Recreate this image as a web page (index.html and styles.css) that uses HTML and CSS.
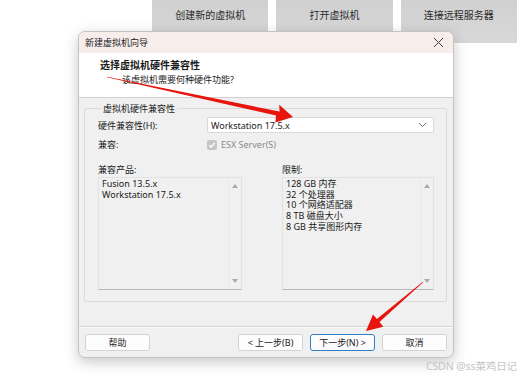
FILE: index.html
```html
<!DOCTYPE html>
<html lang="zh">
<head>
  <meta charset="UTF-8">
  <title>新建虚拟机向导</title>
  <link rel="stylesheet" href="styles.css">
</head>
<body>

  <div class="desk">

    <div class="toolbar">
      <div class="tool">创建新的虚拟机</div>
      <div class="tool">打开虚拟机</div>
      <div class="tool">连接远程服务器</div>
    </div>

    <div class="dialog">
      <div class="titlebar">
        <span>新建虚拟机向导</span>
        <svg class="close" width="11" height="11" viewBox="0 0 11 11">
          <path d="M1 1L10 10M10 1L1 10" stroke="#444" stroke-width="1" fill="none"/>
        </svg>
      </div>

      <div class="header">
        <div class="header-title">选择虚拟机硬件兼容性</div>
        <div class="header-sub">该虚拟机需要何种硬件功能?</div>
      </div>

      <div class="content">
        <fieldset class="group">
          <legend>虚拟机硬件兼容性</legend>

          <div class="row row-select">
            <span class="row-label">硬件兼容性(H):</span>
            <div class="select">
              <span>Workstation 17.5.x</span>
              <svg width="9" height="6" viewBox="0 0 9 6">
                <path d="M1 1L4.5 4.5L8 1" stroke="#777" stroke-width="1" fill="none"/>
              </svg>
            </div>
          </div>

          <div class="row row-check">
            <span class="row-label">兼容:</span>
            <div class="check">
              <span class="check-box">
                <svg width="8" height="8" viewBox="0 0 8 8">
                  <path d="M1.2 4.2L3.2 6L6.8 1.8" stroke="#fff" stroke-width="1.3" fill="none"/>
                </svg>
              </span>
              <span>ESX Server(S)</span>
            </div>
          </div>

          <div class="lists">
            <div class="list-col list-left">
              <div class="list-label">兼容产品:</div>
              <div class="listbox">
                <div class="list-items">
                  <div>Fusion 13.5.x</div>
                  <div>Workstation 17.5.x</div>
                </div>
                <div class="scroll">
                  <span class="tri-up"></span>
                  <span class="tri-down"></span>
                </div>
              </div>
            </div>
            <div class="list-col list-right">
              <div class="list-label">限制:</div>
              <div class="listbox">
                <div class="list-items">
                  <div>128 GB 内存</div>
                  <div>32 个处理器</div>
                  <div>10 个网络适配器</div>
                  <div>8 TB 磁盘大小</div>
                  <div>8 GB 共享图形内存</div>
                </div>
                <div class="scroll">
                  <span class="tri-up"></span>
                  <span class="tri-down"></span>
                </div>
              </div>
            </div>
          </div>
        </fieldset>
      </div>

      <div class="footer">
        <button class="btn">帮助</button>
        <div class="footer-right">
          <button class="btn">&lt; 上一步(B)</button>
          <button class="btn btn-default">下一步(N) &gt;</button>
          <button class="btn">取消</button>
        </div>
      </div>
    </div>

    <!-- annotation arrows drawn over the screenshot -->
    <svg class="arrows" width="517" height="375" viewBox="0 0 517 375">
      <polygon fill="#e8150f" points="107.1,76.7 279.6,111.6 279.2,104.8 293,117 275.4,122.4 276.0,115.6 106.9,77.3"/>
      <polygon fill="#e8150f" points="423.2,282.2 379.5,322.1 383.4,326.7 366,331 373,314.5 376.9,319.1 422.8,281.8"/>
    </svg>

    <div class="watermark">CSDN @ss菜鸡日记</div>
  </div>

</body>
</html>
```

FILE: styles.css
```css
/* Base */
* {
  margin: 0;
  padding: 0;
  box-sizing: border-box;
}

body {
  font-family: "Noto Sans", "Noto Sans CJK SC", sans-serif;
  font-size: 9px;
  color: #1a1a1a;
  background: #fff;
}

.desk {
  position: relative;
  width: 517px;
  height: 375px;
  overflow: hidden;
  background: #fff;
}

/* Background toolbar of the main window */
.toolbar {
  display: flex;
  gap: 8px;
  padding-left: 152px;
}

.tool {
  width: 121px;
  height: 43px;
  padding-top: 7px;
  text-align: center;
  font-size: 10px;
  color: #2a2a2a;
  background: linear-gradient(#d0d0d0, #d8d8d8);
}

/* Dialog window */
.dialog {
  position: absolute;
  left: 78px;
  top: 31px;
  width: 376px;
  height: 327px;
  display: flex;
  flex-direction: column;
  background: #f0f0f0;
  border: 1px solid #c4c4c4;
  border-radius: 7px;
  overflow: hidden;
  box-shadow: 0 4px 14px rgba(0, 0, 0, 0.22);
}

.titlebar {
  height: 21px;
  display: flex;
  align-items: center;
  justify-content: space-between;
  padding: 0 7px 0 6px;
  background: #f7eeec;
  font-size: 9px;
}

.close {
  margin-right: 2px;
}

.header {
  height: 45px;
  background: #fff;
  padding: 5px 0 0 21px;
  border-bottom: 1px solid #cfcfcf;
}

.header-title {
  font-weight: bold;
  font-size: 10px;
  line-height: 14px;
}

.header-sub {
  padding-left: 22px;
  line-height: 15px;
}

/* Main area */
.content {
  flex: 1;
  padding: 4px 6px 0 5px;
}

.group {
  border: 1px solid #dadada;
  border-radius: 2px;
  height: 200px;
  padding: 0 12px 0 13px;
}

.group legend {
  margin-left: 3px;
  padding: 0 2px;
  line-height: 13px;
}

.row {
  display: flex;
  align-items: center;
}

.row-label {
  width: 109px;
}

.row-select {
  margin-top: 2px;
  height: 16px;
}

.select {
  flex: 1;
  height: 16px;
  display: flex;
  align-items: center;
  justify-content: space-between;
  padding: 0 6px 0 3px;
  background: #fff;
  border: 1px solid #d9d9d9;
  border-radius: 2px;
}

.row-check {
  margin-top: 2px;
  height: 19px;
}

.check {
  display: flex;
  align-items: center;
  gap: 4px;
  color: #8a8a8a;
}

.check-box {
  width: 10px;
  height: 10px;
  border-radius: 2px;
  background: #c6c6c6;
  display: flex;
  align-items: center;
  justify-content: center;
}

/* List boxes */
.lists {
  display: flex;
  justify-content: space-between;
  margin-top: 9px;
}

.list-label {
  line-height: 14px;
}

.list-left {
  width: 144px;
}

.list-right {
  width: 152px;
}

.listbox {
  height: 113px;
  display: flex;
  border: 1px solid #e2e2e2;
  border-bottom-color: #b9b9b9;
  background: #f0f0f0;
}

.list-items {
  flex: 1;
  padding: 1px 3px;
  line-height: 10.7px;
}

.scroll {
  width: 13px;
  display: flex;
  flex-direction: column;
  justify-content: space-between;
  align-items: center;
  padding: 6px 0 6px;
  border-left: 1px solid #e8e8e8;
}

.tri-up, .tri-down {
  width: 0;
  height: 0;
  border-left: 3.5px solid transparent;
  border-right: 3.5px solid transparent;
}

.tri-up {
  border-bottom: 4px solid #a8a8a8;
}

.tri-down {
  border-top: 4px solid #a8a8a8;
}

/* Footer buttons */
.footer {
  height: 31px;
  display: flex;
  align-items: flex-start;
  justify-content: space-between;
  padding: 7px 6px 0 6px;
  border-top: 1px solid #d6d6d6;
  box-shadow: inset 0 1px 0 #fafafa;
}

.footer-right {
  display: flex;
  gap: 7px;
}

.btn {
  width: 65px;
  height: 17px;
  font-family: inherit;
  font-size: 9px;
  color: #1a1a1a;
  background: #fdfdfd;
  border: 1px solid #d3d3d3;
  border-radius: 3px;
}

.btn-default {
  border-color: #2f7fc8;
}

/* Overlay marks */
.arrows {
  position: absolute;
  left: 0;
  top: 0;
  pointer-events: none;
}

.watermark {
  position: absolute;
  right: 0;
  top: 358px;
  font-size: 10.5px;
  color: #c4c4c4;
  letter-spacing: -0.1px;
}
```
